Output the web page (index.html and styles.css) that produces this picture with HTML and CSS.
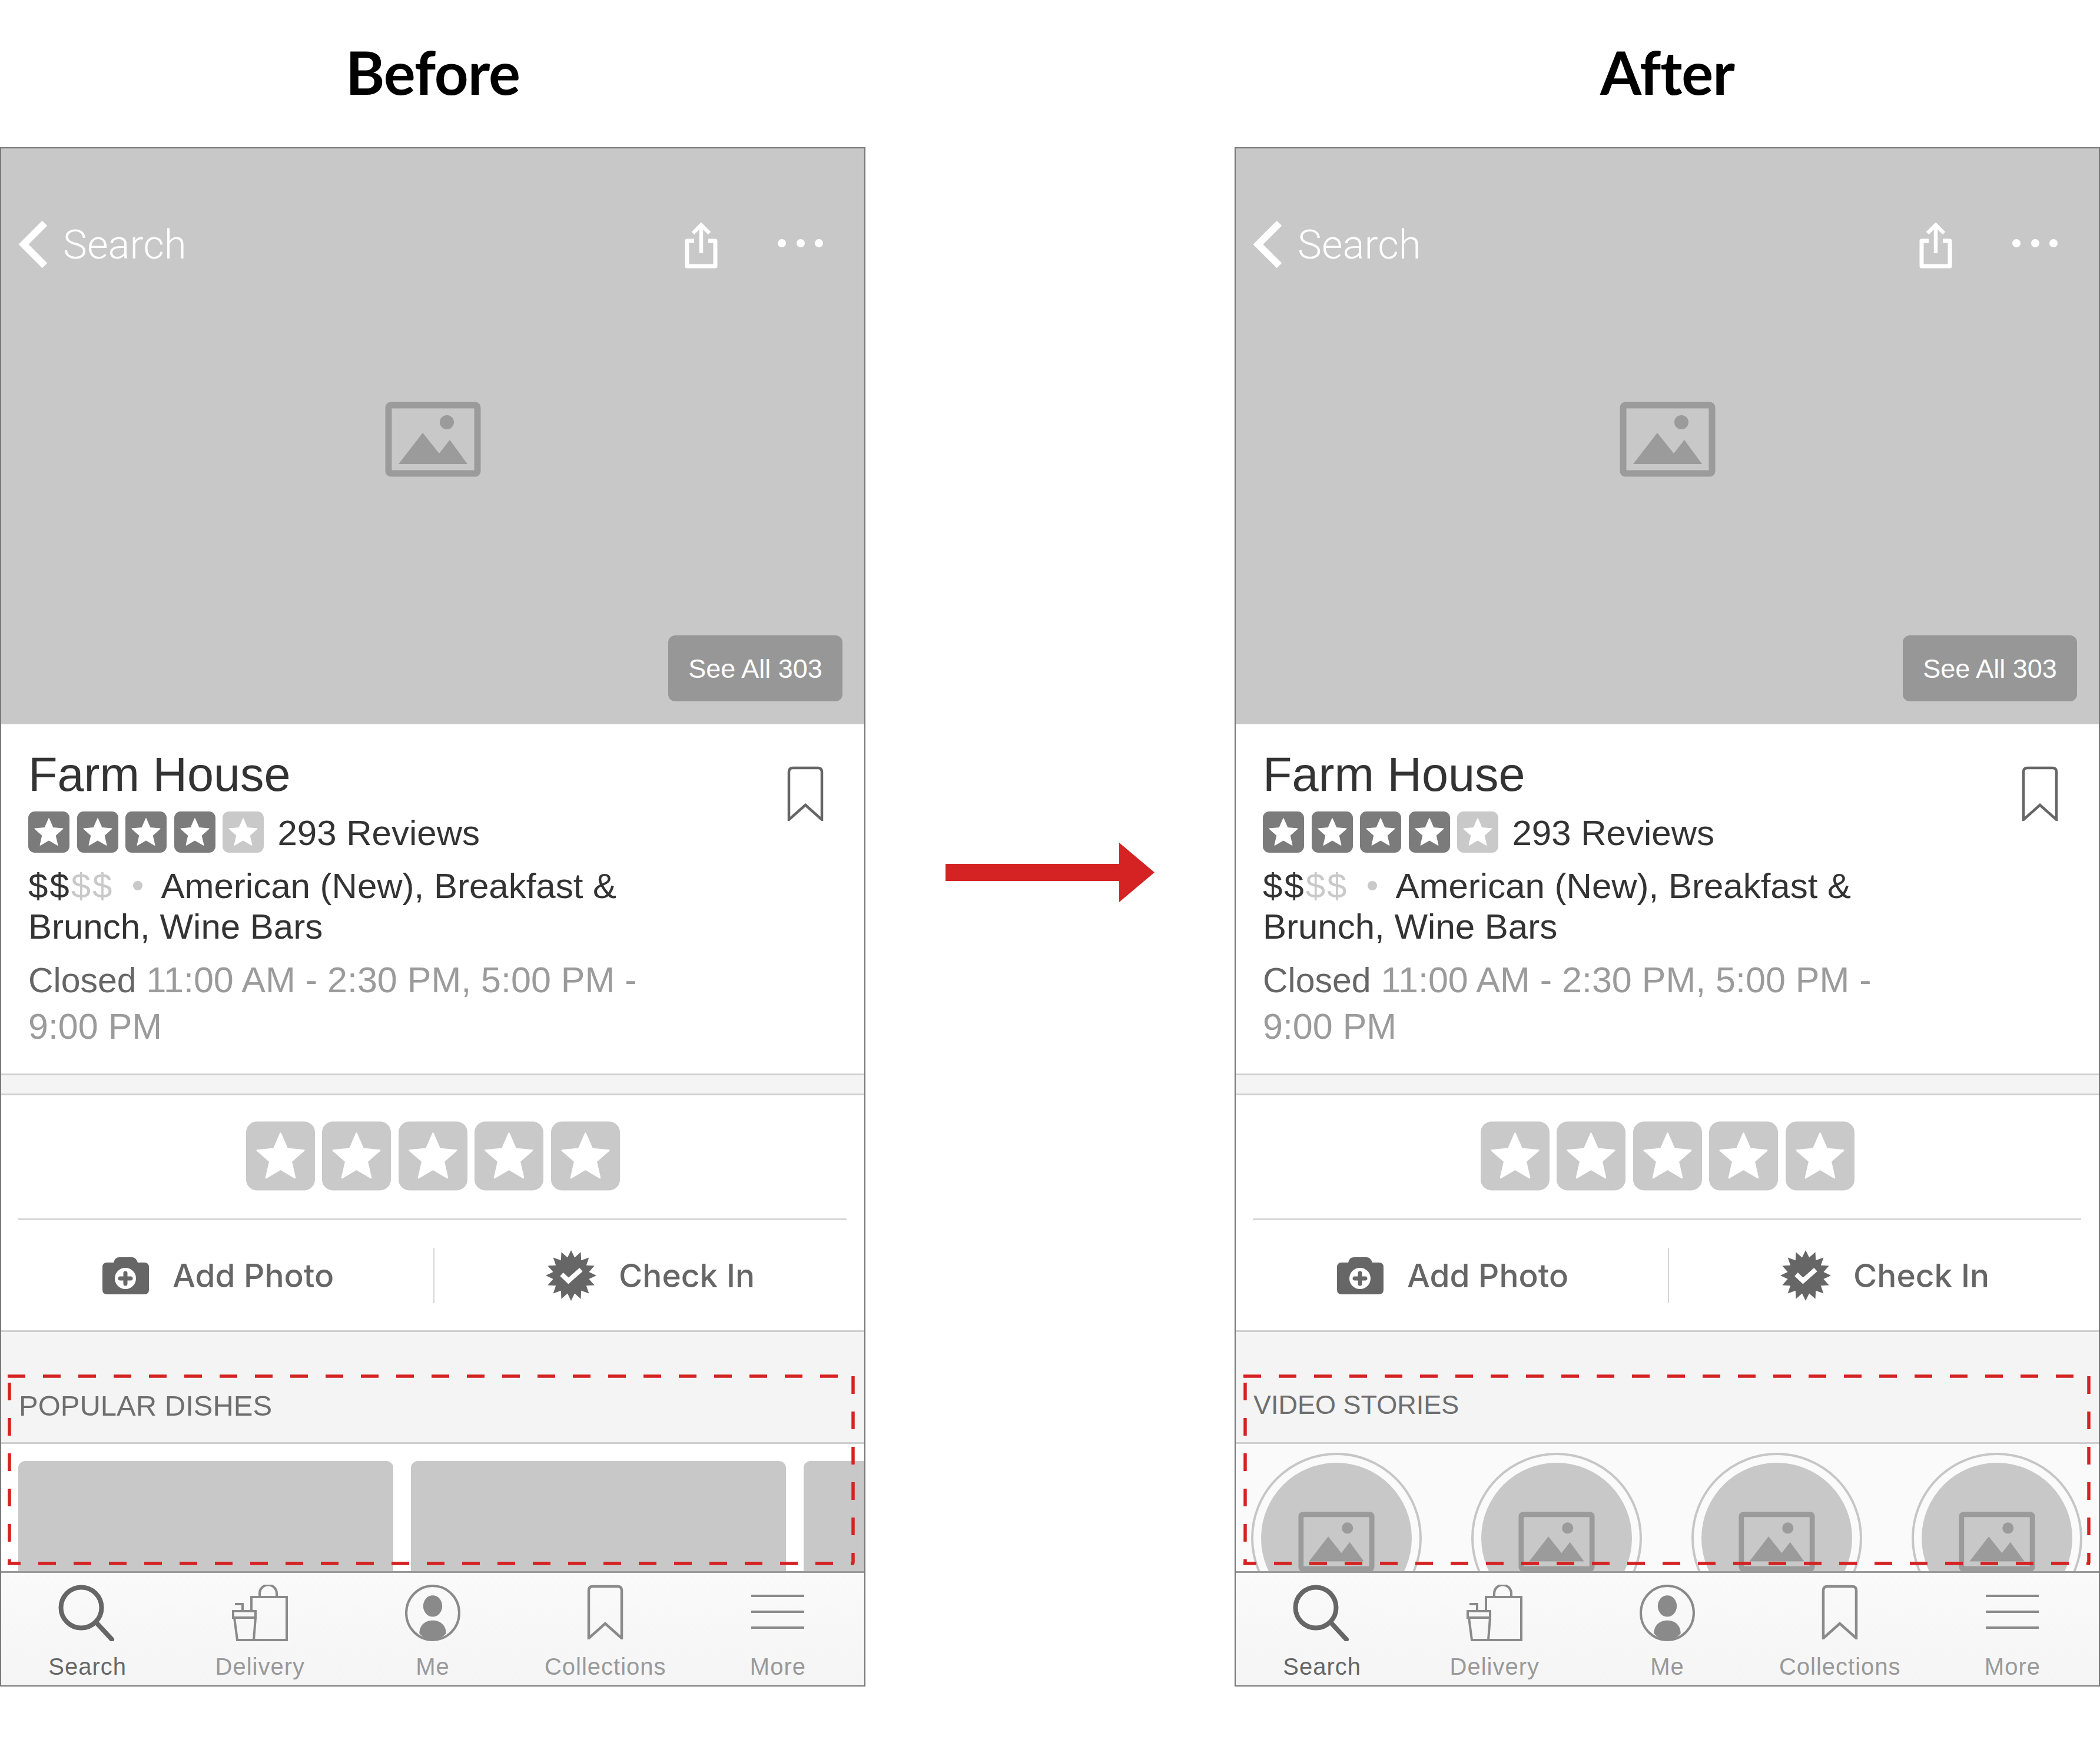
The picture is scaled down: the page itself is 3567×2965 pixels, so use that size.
FILE: index.html
```html
<!DOCTYPE html>
<html>
<head>
  <meta charset="utf-8">
  <title>Before and after</title>
  <link rel="stylesheet" href="styles.css">
</head>
<body>

<!-- shared icons -->
<svg class="defs" width="0" height="0">
  <symbol id="i-picture" viewBox="0 0 163 128">
    <rect x="6" y="6" width="151" height="116" rx="4" fill="none" stroke="currentColor" stroke-width="11"/>
    <circle cx="105" cy="35" r="12" fill="currentColor"/>
    <path d="M23 106 L64 53 L92 88 L110 65 L140 106 Z" fill="currentColor"/>
  </symbol>
  <symbol id="i-star" viewBox="0 0 70 70">
    <rect width="70" height="70" rx="11" fill="currentColor"/>
    <polygon points="35,12 41.8,27.7 58.8,29.3 45.9,40.6 49.7,57.2 35,48.5 20.3,57.2 24.1,40.6 11.2,29.3 28.2,27.7" fill="#fff" stroke="#fff" stroke-width="1.5" stroke-linejoin="round"/>
  </symbol>
  <symbol id="i-mark" viewBox="0 0 62 93">
    <path d="M3 91 V10 Q3 3 10 3 H52 Q59 3 59 10 V91 L31 66 Z" fill="none" stroke="currentColor" stroke-width="4.5"/>
  </symbol>
  <symbol id="i-back" viewBox="0 0 50 80">
    <path d="M45 4 L9 40 L45 76" fill="none" stroke="#fff" stroke-width="12"/>
  </symbol>
  <symbol id="i-share" viewBox="0 0 56 78">
    <path d="M16 31 H4 V74 H52 V31 H40" fill="none" stroke="#fff" stroke-width="7" stroke-linejoin="round"/>
    <path d="M28 52 V4 M14 18 L28 4 L42 18" fill="none" stroke="#fff" stroke-width="6.5"/>
  </symbol>
  <symbol id="i-dots" viewBox="0 0 78 16">
    <circle cx="7" cy="8" r="7" fill="#fff"/>
    <circle cx="39" cy="8" r="7" fill="#fff"/>
    <circle cx="70" cy="8" r="7" fill="#fff"/>
  </symbol>
  <symbol id="i-camera" viewBox="0 0 79 63">
    <path d="M8 9 H19 Q21 0 29 0 H50 Q57 0 60 9 H71 Q79 9 79 17 V55 Q79 63 71 63 H8 Q0 63 0 55 V17 Q0 9 8 9 Z" fill="currentColor"/>
    <circle cx="39" cy="36" r="18" fill="#fff"/>
    <path d="M39 27 V45 M30 36 H48" stroke="currentColor" stroke-width="7" stroke-linecap="round"/>
  </symbol>
  <symbol id="i-badge" viewBox="0 0 86 86">
    <polygon fill="currentColor" points="43,0 49.05,12.6 59.5,3.3 60.2,17.2 73.4,12.6 68.8,25.8 82.7,26.5 73.4,36.95 86,43 73.4,49.05 82.7,59.5 68.8,60.2 73.4,73.4 60.2,68.8 59.5,82.7 49.05,73.4 43,86 36.95,73.4 26.5,82.7 25.8,68.8 12.6,73.4 17.2,60.2 3.3,59.5 12.6,49.05 0,43 12.6,36.95 3.3,26.5 17.2,25.8 12.6,12.6 25.8,17.2 26.5,3.3 36.95,12.6"/>
    <path d="M27 41 L38.5 52 L60 33" fill="none" stroke="#fff" stroke-width="8"/>
  </symbol>
  <symbol id="i-search" viewBox="0 0 96 98">
    <circle cx="39" cy="41" r="34.5" fill="none" stroke="currentColor" stroke-width="8"/>
    <path d="M66 68 L91 95" stroke="currentColor" stroke-width="8" stroke-linecap="round"/>
  </symbol>
  <symbol id="i-delivery" viewBox="0 0 96 96">
    <path d="M33 45 V21 H93 V94 H37 M47 21 V15 a14.500 14.500 0 0 1 29 0 V21" fill="none" stroke="currentColor" stroke-width="4"/>
    <path d="M2 45 H40 V56 H2 Z M4 56 L9 94 H37 L40 56 M5 33 H18 V45" fill="none" stroke="currentColor" stroke-width="4"/>
  </symbol>
  <symbol id="i-me" viewBox="0 0 93 95">
    <ellipse cx="46.500" cy="47.500" rx="44.500" ry="45.500" fill="none" stroke="currentColor" stroke-width="4"/>
    <ellipse cx="46.500" cy="36" rx="16" ry="18" fill="currentColor"/>
    <path d="M24 82 C24 68 34 60 46.500 60 C59 60 69 68 69 82 C62 90 55 93 46.500 93 C38 93 31 90 24 82 Z" fill="currentColor"/>
  </symbol>
  <symbol id="i-more" viewBox="0 0 90 60">
    <path d="M0 3 H90 M0 30 H90 M0 57 H90" stroke="currentColor" stroke-width="4"/>
  </symbol>
  <symbol id="i-dashes" viewBox="0 0 1466 2610">
    <g fill="none" stroke="#d52222" stroke-width="5.500" stroke-dasharray="30 30">
      <path d="M11 2085 H1449"/>
      <path d="M1447 2085 V2403"/>
      <path d="M1449 2403 H11" stroke-dashoffset="24"/>
      <path d="M14 2403 V2085" stroke-dashoffset="23"/>
    </g>
  </symbol>
</svg>

<div class="page">

  <!-- left phone -->
  <section class="panel">
    <h1 class="panel-title">Before</h1>
    <div class="phone">
      <div class="hero">
        <div class="nav">
          <svg class="nav-back"><use href="#i-back"/></svg>
          <span class="nav-label">Search</span>
          <svg class="nav-share"><use href="#i-share"/></svg>
          <svg class="nav-dots"><use href="#i-dots"/></svg>
        </div>
        <svg class="hero-pic"><use href="#i-picture"/></svg>
        <div class="see-all">See All 303</div>
      </div>

      <div class="info">
        <div class="info-text">
          <div class="biz-name">Farm House</div>
          <div class="biz-rating">
            <svg class="mini-star"><use href="#i-star"/></svg>
            <svg class="mini-star"><use href="#i-star"/></svg>
            <svg class="mini-star"><use href="#i-star"/></svg>
            <svg class="mini-star"><use href="#i-star"/></svg>
            <svg class="mini-star off"><use href="#i-star"/></svg>
            <span class="biz-reviews">293 Reviews</span>
          </div>
          <div class="biz-tags">
            <div><span class="price">$$</span><span class="price faint">$$</span><span class="dot"></span><span>American (New), Breakfast &amp;</span></div>
            <div>Brunch, Wine Bars</div>
          </div>
          <div class="biz-hours">
            <div><span class="closed">Closed</span> <span>11:00 AM - 2:30 PM, 5:00 PM -</span></div>
            <div>9:00 PM</div>
          </div>
        </div>
        <svg class="info-mark"><use href="#i-mark"/></svg>
      </div>

      <div class="band"></div>

      <div class="rate">
        <div class="rate-stars">
          <svg class="big-star"><use href="#i-star"/></svg>
          <svg class="big-star"><use href="#i-star"/></svg>
          <svg class="big-star"><use href="#i-star"/></svg>
          <svg class="big-star"><use href="#i-star"/></svg>
          <svg class="big-star"><use href="#i-star"/></svg>
        </div>
        <div class="rate-line"></div>
        <div class="actions">
          <div class="action first">
            <svg class="camera"><use href="#i-camera"/></svg>
            <span>Add Photo</span>
          </div>
          <div class="action second">
            <svg class="badge"><use href="#i-badge"/></svg>
            <span>Check In</span>
          </div>
        </div>
      </div>

      <div class="sec-head">POPULAR DISHES</div>
      <div class="dishes">
        <div class="dish"></div>
        <div class="dish"></div>
        <div class="dish"></div>
      </div>

      <div class="tabs">
        <div class="tab active"><svg class="tab-search"><use href="#i-search"/></svg><span>Search</span></div>
        <div class="tab"><svg class="tab-delivery"><use href="#i-delivery"/></svg><span>Delivery</span></div>
        <div class="tab"><svg class="tab-me"><use href="#i-me"/></svg><span>Me</span></div>
        <div class="tab"><svg class="tab-mark"><use href="#i-mark"/></svg><span>Collections</span></div>
        <div class="tab"><svg class="tab-more"><use href="#i-more"/></svg><span>More</span></div>
      </div>

      <svg class="dashes"><use href="#i-dashes"/></svg>
    </div>
  </section>

  <!-- arrow between the phones -->
  <div class="gutter">
    <svg class="arrow" viewBox="0 0 355 101"><path d="M0 36 H295 V0 L355 50.500 L295 101 V65 H0 Z" fill="#d52222"/></svg>
  </div>

  <!-- right phone -->
  <section class="panel">
    <h1 class="panel-title">After</h1>
    <div class="phone after">
      <div class="hero">
        <div class="nav">
          <svg class="nav-back"><use href="#i-back"/></svg>
          <span class="nav-label">Search</span>
          <svg class="nav-share"><use href="#i-share"/></svg>
          <svg class="nav-dots"><use href="#i-dots"/></svg>
        </div>
        <svg class="hero-pic"><use href="#i-picture"/></svg>
        <div class="see-all">See All 303</div>
      </div>

      <div class="info">
        <div class="info-text">
          <div class="biz-name">Farm House</div>
          <div class="biz-rating">
            <svg class="mini-star"><use href="#i-star"/></svg>
            <svg class="mini-star"><use href="#i-star"/></svg>
            <svg class="mini-star"><use href="#i-star"/></svg>
            <svg class="mini-star"><use href="#i-star"/></svg>
            <svg class="mini-star off"><use href="#i-star"/></svg>
            <span class="biz-reviews">293 Reviews</span>
          </div>
          <div class="biz-tags">
            <div><span class="price">$$</span><span class="price faint">$$</span><span class="dot"></span><span>American (New), Breakfast &amp;</span></div>
            <div>Brunch, Wine Bars</div>
          </div>
          <div class="biz-hours">
            <div><span class="closed">Closed</span> <span>11:00 AM - 2:30 PM, 5:00 PM -</span></div>
            <div>9:00 PM</div>
          </div>
        </div>
        <svg class="info-mark"><use href="#i-mark"/></svg>
      </div>

      <div class="band"></div>

      <div class="rate">
        <div class="rate-stars">
          <svg class="big-star"><use href="#i-star"/></svg>
          <svg class="big-star"><use href="#i-star"/></svg>
          <svg class="big-star"><use href="#i-star"/></svg>
          <svg class="big-star"><use href="#i-star"/></svg>
          <svg class="big-star"><use href="#i-star"/></svg>
        </div>
        <div class="rate-line"></div>
        <div class="actions">
          <div class="action first">
            <svg class="camera"><use href="#i-camera"/></svg>
            <span>Add Photo</span>
          </div>
          <div class="action second">
            <svg class="badge"><use href="#i-badge"/></svg>
            <span>Check In</span>
          </div>
        </div>
      </div>

      <div class="sec-head video">VIDEO STORIES</div>
      <div class="stories">
        <div class="story"><div class="story-disc"><svg class="story-pic"><use href="#i-picture"/></svg></div></div>
        <div class="story"><div class="story-disc"><svg class="story-pic"><use href="#i-picture"/></svg></div></div>
        <div class="story"><div class="story-disc"><svg class="story-pic"><use href="#i-picture"/></svg></div></div>
        <div class="story"><div class="story-disc"><svg class="story-pic"><use href="#i-picture"/></svg></div></div>
      </div>

      <div class="tabs">
        <div class="tab active"><svg class="tab-search"><use href="#i-search"/></svg><span>Search</span></div>
        <div class="tab"><svg class="tab-delivery"><use href="#i-delivery"/></svg><span>Delivery</span></div>
        <div class="tab"><svg class="tab-me"><use href="#i-me"/></svg><span>Me</span></div>
        <div class="tab"><svg class="tab-mark"><use href="#i-mark"/></svg><span>Collections</span></div>
        <div class="tab"><svg class="tab-more"><use href="#i-more"/></svg><span>More</span></div>
      </div>

      <svg class="dashes"><use href="#i-dashes"/></svg>
    </div>
  </section>

</div>
</body>
</html>
```

FILE: styles.css
```css
body {
  margin: 0;
  background-color: #fff;
  font-family: "Liberation Sans", Arial, sans-serif;
  color: #333;
  overflow: hidden;
}

.defs {
  position: absolute;
}

.page {
  display: flex;
  width: 3567px;
  height: 2965px;
}

.panel {
  width: 1470px;
  flex-shrink: 0;
}

.panel-title {
  height: 250px;
  margin: 0;
  padding-top: 62px;
  box-sizing: border-box;
  font-family: Lato, sans-serif;
  font-size: 101px;
  font-weight: 700;
  line-height: 120px;
  letter-spacing: -1px;
  text-align: center;
  color: #000;
}

.gutter {
  width: 627px;
  flex-shrink: 0;
  padding: 1431px 0 0 136px;
  box-sizing: border-box;
}

.arrow {
  display: block;
  width: 355px;
  height: 101px;
}

/* phone frame */
.phone {
  position: relative;
  height: 2614px;
  box-sizing: border-box;
  border: 2px solid #777;
  overflow: hidden;
}

.dashes {
  position: absolute;
  left: 0;
  top: 0;
  width: 1466px;
  height: 2610px;
}

.phone.after .dashes {
  left: 2px;
}

/* photo header */
.hero {
  position: relative;
  display: flex;
  flex-direction: column;
  height: 978px;
  background-color: #c8c8c8;
}

.nav {
  display: flex;
  align-items: center;
  height: 86px;
  margin-top: 120px;
  padding: 0 69px 0 29px;
}

.nav-back {
  width: 50px;
  height: 80px;
}

.nav-label {
  margin-left: 26px;
  font-family: Roboto, sans-serif;
  font-size: 69px;
  font-weight: 300;
  color: #fff;
}

.nav-share {
  width: 56px;
  height: 78px;
  margin-left: auto;
  margin-top: 4px;
}

.nav-dots {
  width: 78px;
  height: 16px;
  margin-left: 102px;
  margin-top: -4px;
}

.hero-pic {
  width: 163px;
  height: 128px;
  margin: 224px auto 0;
  color: #9b9b9b;
}

.see-all {
  position: absolute;
  right: 37px;
  bottom: 39px;
  width: 296px;
  height: 112px;
  border-radius: 12px;
  background-color: #979797;
  color: #fff;
  font-size: 45px;
  line-height: 114px;
  text-align: center;
}

/* business details */
.info {
  display: flex;
  justify-content: space-between;
  height: 593px;
  box-sizing: border-box;
  padding: 40px 69px 0 46px;
  background-color: #fff;
}

.info-text {
  width: 1060px;
}

.biz-name {
  font-size: 81px;
  line-height: 90px;
}

.biz-rating {
  display: flex;
  align-items: center;
  gap: 12.5px;
  margin-top: 17px;
}

.mini-star {
  width: 70px;
  height: 70px;
  color: #7b7b7b;
}

.mini-star.off {
  color: #c9c9c9;
}

.biz-reviews {
  margin-left: 11px;
  padding-top: 3px;
  font-size: 60px;
}

.biz-tags {
  margin-top: 21px;
  font-size: 60px;
  line-height: 69px;
}

.price {
  letter-spacing: 3px;
}

.faint {
  color: #c9c9c9;
}

.dot {
  display: inline-block;
  width: 16px;
  height: 16px;
  margin: 0 32px 10px 32px;
  border-radius: 50%;
  background-color: #c9c9c9;
  vertical-align: middle;
}

.biz-hours {
  margin-top: 17px;
  font-size: 61px;
  line-height: 78px;
  color: #9b9b9b;
}

.closed {
  font-size: 59px;
  color: #666;
}

.info-mark {
  width: 62px;
  height: 93px;
  margin-top: 31px;
  color: #666;
}

.band {
  height: 37px;
  box-sizing: border-box;
  border-top: 3px solid #cfcfcf;
  border-bottom: 3px solid #cfcfcf;
  background-color: #f4f4f4;
}

/* rating and actions */
.rate {
  height: 402px;
  box-sizing: border-box;
  border-bottom: 3px solid #cfcfcf;
  background-color: #fff;
}

.rate-stars {
  display: flex;
  justify-content: center;
  gap: 12.5px;
  padding-top: 44px;
}

.big-star {
  width: 117px;
  height: 118px;
  color: #c9c9c9;
}

.rate-line {
  height: 3px;
  margin: 47px 30px 0 29px;
  background-color: #d6d6d6;
}

.actions {
  display: flex;
  margin-top: 47px;
}

.action {
  display: flex;
  align-items: center;
  justify-content: center;
  height: 94px;
  box-sizing: border-box;
  font-family: Inter, sans-serif;
  font-size: 55px;
  font-weight: 500;
  color: #666;
}

.action.first {
  flex: 0 0 736px;
  gap: 40px;
  padding-left: 3px;
  border-right: 2px solid #d6d6d6;
}

.action.second {
  flex: 1;
  gap: 38px;
  padding-left: 3px;
}

.camera {
  width: 79px;
  height: 63px;
  color: #666;
}

.badge {
  width: 86px;
  height: 86px;
  color: #666;
}

/* section below */
.sec-head {
  height: 190px;
  box-sizing: border-box;
  padding: 95px 0 0 30px;
  border-bottom: 3px solid #cfcfcf;
  background-color: #f4f4f4;
  font-size: 49px;
  line-height: 60px;
  color: #6e6e6e;
}

.sec-head.video {
  padding-top: 94px;
  padding-left: 30px;
  font-size: 45px;
}

.dishes {
  display: flex;
  gap: 30px;
  height: 216px;
  box-sizing: border-box;
  padding: 29px 0 0 29px;
  background-color: #fff;
  overflow: hidden;
}

.dish {
  width: 637px;
  height: 300px;
  flex-shrink: 0;
  border-radius: 12px;
  background-color: #c8c8c8;
}

.stories {
  display: flex;
  gap: 84px;
  height: 216px;
  box-sizing: border-box;
  padding: 15px 0 0 26px;
  background-color: #fafafa;
  overflow: hidden;
}

.story {
  width: 290px;
  height: 290px;
  flex-shrink: 0;
  box-sizing: border-box;
  padding: 13px;
  border: 4px solid #c6c6c6;
  border-radius: 50%;
}

.story-disc {
  display: flex;
  justify-content: center;
  height: 256px;
  box-sizing: border-box;
  padding-top: 83px;
  border-radius: 50%;
  background-color: #c8c8c8;
}

.story-pic {
  width: 130px;
  height: 102px;
  color: #9b9b9b;
}

/* tab bar */
.tabs {
  display: flex;
  height: 194px;
  box-sizing: border-box;
  border-top: 3px solid #999;
  background: linear-gradient(#fafafa, #f5f5f5);
}

.tab {
  display: flex;
  flex: 1;
  flex-direction: column;
  align-items: center;
  height: 191px;
  color: #999;
  font-size: 40px;
  letter-spacing: 1px;
}

.tab span {
  line-height: 48px;
}

.tab svg {
  margin-top: 20px;
  height: 96px;
  width: 96px;
  margin-bottom: 19px;
  color: #8a8a8a;
}

.tab svg.tab-search {
  width: 96px;
  height: 98px;
  margin-top: 18px;
  margin-bottom: 19px;
  margin-left: -4px;
}

.tab svg.tab-mark {
  width: 62px;
  height: 93px;
  margin-bottom: 22px;
}

.tab svg.tab-more {
  width: 90px;
  height: 60px;
  margin-top: 36px;
  margin-bottom: 39px;
}

.tab.active {
  color: #666;
}

.tab.active svg {
  color: #666;
}
```
